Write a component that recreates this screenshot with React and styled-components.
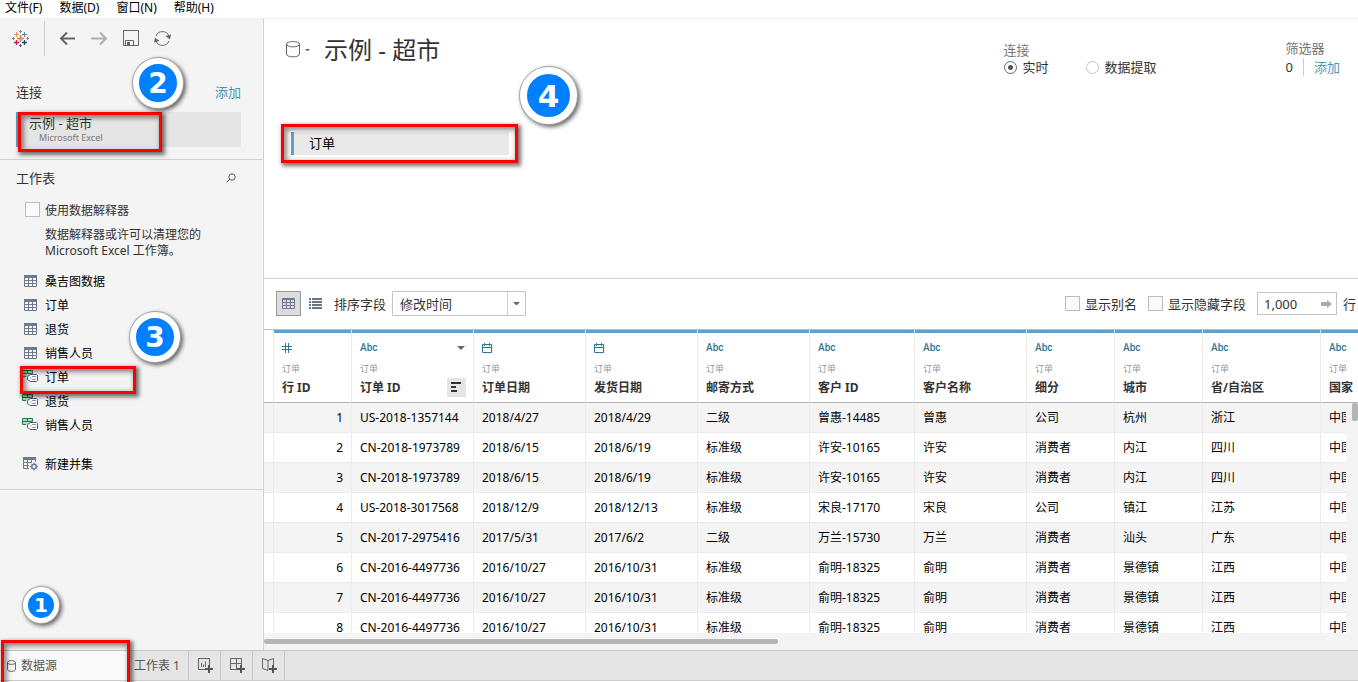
import React from "react";
import styled, { createGlobalStyle, css } from "styled-components";

const GlobalStyle = createGlobalStyle`
  *, *::before, *::after { box-sizing: border-box; }
  body {
    margin: 0;
    background: #fff;
    color: #333;
    font-family: "Noto Sans", "Noto Sans CJK SC", sans-serif;
    font-size: 12px;
    line-height: 16px;
  }
  button, input, select { font: inherit; color: inherit; margin: 0; }
  button { border: 0; padding: 0; background: none; cursor: pointer; }
  svg { display: block; flex: none; }
  h1, h2, p { margin: 0; font-weight: 400; }
  ul { list-style: none; margin: 0; padding: 0; }
`;

const Page = styled.div`
  display: flex;
  flex-direction: column;
  height: 100vh;
  overflow: hidden;
`;

const MenuBar = styled.nav`
  display: flex;
  gap: 17px;
  height: 19px;
  padding: 0 5px;
  border-bottom: 1px solid #f0f0f0;
  flex: none;
`;

const MenuButton = styled.button`
  color: #000;
  line-height: 16px;
  height: 16px;
`;

const Workspace = styled.div`
  display: grid;
  grid-template-columns: 264px minmax(0, 1fr);
  flex: 1;
  min-height: 0;
`;

const Sidebar = styled.aside`
  background: #f4f4f4;
  border-right: 1px solid #d0d0d0;
`;

const IconBar = styled.div`
  display: flex;
  align-items: center;
  gap: 14px;
  height: 39px;
  padding-left: 11px;
`;

const LogoBox = styled.div`
  display: flex;
  align-items: center;
  height: 35px;
  padding-right: 14px;
  border-right: 1px solid #cfcfcf;
`;

const SidebarSection = styled.section`
  border-bottom: 1px solid #d0d0d0;
  padding: ${(p) => p.$pad};
`;

const SectionHead = styled.div`
  display: flex;
  justify-content: space-between;
  align-items: center;
  margin-bottom: ${(p) => p.$gap}px;
  padding-right: ${(p) => p.$right || 0}px;
  h2 { font-size: 13px; }
`;

const AccentLink = styled.a`
  color: #4a97ba;
  font-size: 13px;
  text-decoration: none;
`;

const Anchor = styled.div`
  position: relative;
`;

const Connection = styled.button`
  display: block;
  width: 100%;
  height: 35px;
  padding-left: 10px;
  text-align: left;
  background: #e5e5e5;
  border-left: 3px solid #5fa2c6;
  font-size: 13px;
  small {
    display: block;
    padding-left: 10px;
    font-size: 9px;
    line-height: 14px;
    color: #777;
  }
`;

const CheckLabel = styled.label`
  display: flex;
  align-items: center;
  gap: 5px;
  height: 16px;
  white-space: nowrap;
`;

const CheckBox = styled.input`
  appearance: none;
  width: 15px;
  height: 15px;
  background: #fafafa;
  border: 1px solid #bdbdbd;
`;

const Interpreter = styled.div`
  padding-left: 9px;
  label { height: 17px; align-items: flex-start; line-height: 18px; }
  p { padding: 8px 0 0 20px; width: 190px; }
`;

const SheetList = styled.ul`
  padding: ${(p) => p.$top}px 0 0 5px;
`;

const SheetItem = styled.li`
  position: relative;
`;

const SheetButton = styled.button`
  display: flex;
  align-items: center;
  gap: 5px;
  height: 24px;
  color: #000;
`;

const SheetName = styled.span`
  padding-top: 2px;
`;

const IconSlot = styled.span`
  display: flex;
  justify-content: center;
  width: 19px;
`;

const Mark = styled.div`
  position: absolute;
  z-index: 2;
  pointer-events: none;
  border: 3px solid #fe0000;
  box-shadow: 2px 2px 4px 1px rgba(0, 0, 0, 0.55), inset 2px 2px 5px 1px rgba(0, 0, 0, 0.45);
  top: ${(p) => p.$top}px;
  left: ${(p) => p.$left}px;
  width: ${(p) => p.$width}px;
  height: ${(p) => p.$height}px;
`;

const Step = styled.div`
  position: absolute;
  z-index: 3;
  pointer-events: none;
  display: flex;
  align-items: center;
  justify-content: center;
  top: ${(p) => p.$top}px;
  left: ${(p) => p.$left}px;
  width: ${(p) => p.$size}px;
  height: ${(p) => p.$size}px;
  border-radius: 50%;
  border: ${(p) => p.$ring}px solid #fff;
  background: #007fff;
  color: #fff;
  font: bold ${(p) => p.$font}px "DejaVu Sans", sans-serif;
  box-shadow: 0 0 0 1px #a5a5a5, 2px 2px 4px 1px rgba(0, 0, 0, 0.6);
`;

const Main = styled.main`
  display: flex;
  flex-direction: column;
  min-height: 0;
`;

const Canvas = styled.section`
  position: relative;
  height: 260px;
  flex: none;
  border-bottom: 1px solid #d0d0d0;
`;

const CanvasHead = styled.header`
  display: flex;
  align-items: flex-start;
  height: 105px;
  padding: 20px 18px 0 22px;
`;

const SourceTitle = styled.div`
  display: flex;
  align-items: center;
  gap: 5px;
  flex: 1;
  h1 { font-size: 24px; line-height: 22px; padding-left: 9px; }
`;

const OptionGroup = styled.fieldset`
  border: 0;
  margin: 0 129px 0 0;
  padding: 3px 0 0;
`;

const GroupTitle = styled.div`
  color: #777;
  font-size: 13px;
`;

const OptionRow = styled.div`
  display: flex;
  gap: 37px;
  padding-top: 1px;
`;

const RadioLabel = styled.label`
  display: flex;
  align-items: center;
  gap: 6px;
  font-size: 13px;
`;

const Radio = styled.input`
  appearance: none;
  width: 13px;
  height: 13px;
  border-radius: 50%;
  border: 1px solid #c4c4c4;
  background: #fff;
  &:checked {
    border-color: #666;
    background: radial-gradient(circle, #555 0 2px, #fff 3px);
  }
`;

const FilterGroup = styled.div`
  padding-top: 1px;
`;

const FilterRow = styled.div`
  display: flex;
  align-items: center;
  padding-top: 2px;
  font-size: 13px;
  span { padding-right: 10px; }
  a { border-left: 1px solid #ccc; padding-left: 10px; line-height: 18px; }
`;

const PillRow = styled.div`
  position: relative;
  padding: 8px 0 0 27px;
`;

const TablePill = styled.button`
  display: block;
  width: 218px;
  height: 23px;
  padding: 0 0 1px 15px;
  text-align: left;
  font-size: 13px;
  color: #000;
  background: #e9e9e9;
  border-left: 3px solid #5fa2c6;
`;

const GridBar = styled.div`
  display: flex;
  align-items: center;
  height: 50px;
  padding: 0 2px 1px 12px;
  flex: none;
  font-size: 13px;
`;

const ViewButton = styled.button`
  display: flex;
  align-items: center;
  justify-content: center;
  width: 25px;
  height: 25px;
  margin-right: 2px;
  ${(p) => p.$on && css`background: #dcdcdc; border: 1px solid #999;`}
`;

const SortLabel = styled.label`
  padding: 0 6px 0 4px;
`;

const SelectBox = styled.div`
  position: relative;
  margin-right: auto;
  select {
    appearance: none;
    display: block;
    width: 134px;
    height: 25px;
    padding: 0 26px 0 7px;
    background: #fff;
    border: 1px solid #c4c4c4;
    border-radius: 1px;
  }
`;

const SelectArrow = styled.span`
  position: absolute;
  inset: 1px 1px 1px auto;
  width: 18px;
  display: flex;
  align-items: center;
  justify-content: center;
  border-left: 1px solid #d0d0d0;
  pointer-events: none;
`;

const GridOptions = styled.div`
  display: flex;
  align-items: center;
  gap: 11px;
`;

const RowCount = styled.label`
  display: flex;
  align-items: center;
  gap: 6px;
`;

const CountField = styled.span`
  display: flex;
  align-items: center;
  width: 80px;
  height: 23px;
  padding: 0 4px 0 6px;
  border: 1px solid #c4c4c4;
  input { width: 0; flex: 1; border: 0; padding: 0; outline: 0; background: none; }
`;

const Grid = styled.div`
  position: relative;
  display: flex;
  flex-direction: column;
  flex: 1;
  min-height: 0;
  border-top: 1px solid #bbb;
`;

const GridView = styled.div`
  flex: 1;
  min-height: 0;
  overflow: hidden;
`;

const Table = styled.table`
  width: 100%;
  table-layout: fixed;
  border-collapse: separate;
  border-spacing: 0;
  th, td { padding: 0; white-space: nowrap; overflow: hidden; text-align: left; border-right: 1px solid #ebebeb; }
  th { border-bottom: 1px solid #b5b5b5; }
  td { height: 30px; padding: 0 8px; color: #000; border-bottom: 1px solid #ebebeb; text-overflow: clip; }
  th:last-child, td:last-child { border-right: 0; }
  td:nth-child(2) { text-align: right; }
  tbody tr:nth-child(odd) { background: #f4f4f4; }
`;

const HeadBox = styled.div`
  border-top: 3px solid #5fa2c6;
  padding: 7px 8px 0;
  height: 72px;
`;

const TypeRow = styled.div`
  display: flex;
  align-items: center;
  justify-content: space-between;
  height: 16px;
  color: #2f7693;
  font: 500 10px/16px Roboto, sans-serif;
`;

const TableName = styled.div`
  margin: 7px 0 5px;
  font-size: 9px;
  line-height: 12px;
  font-weight: 400;
  color: #999;
`;

const FieldName = styled.div`
  display: flex;
  align-items: center;
  justify-content: space-between;
  height: 16px;
  font-weight: 700;
`;

const SortButton = styled.button`
  display: flex;
  align-items: center;
  justify-content: center;
  width: 19px;
  height: 19px;
  margin: -2px -1px 0 0;
  background: #e6e6e6;
`;

const VerticalBar = styled.div`
  position: absolute;
  top: 73px;
  right: 0;
  bottom: 0;
  width: 12px;
  background: #f4f4f4;
  &::before {
    content: "";
    display: block;
    width: 6px;
    height: 18px;
    margin-left: auto;
    border-radius: 2px;
    background: #b5b5b5;
  }
`;

const HorizontalBar = styled.div`
  display: flex;
  align-items: center;
  height: 17px;
  background: #f4f4f4;
  flex: none;
  &::before {
    content: "";
    width: 47%;
    height: 5px;
    border-radius: 2px;
    background: #b5b5b5;
  }
`;

const TabBar = styled.footer`
  display: flex;
  height: 31px;
  margin-bottom: 1px;
  background: #e5e5e5;
  border-top: 1px solid #c6c6c6;
  border-bottom: 1px solid #cdcdcd;
  flex: none;
`;

const TabSlot = styled.div`
  position: relative;
  display: flex;
`;

const Tab = styled.button`
  display: flex;
  align-items: center;
  gap: 5px;
  width: ${(p) => p.$width}px;
  padding-left: ${(p) => p.$pad}px;
  color: #555;
  background: ${(p) => (p.$on ? "#f9f9f9" : "none")};
  border-right: 1px solid #c6c6c6;
`;

const stroke = { fill: "none", stroke: "#666", strokeWidth: 1 };

function Plus({ x, y, r, c, w = 1 }) {
  return <path d={`M${x - r} ${y}H${x + r}M${x} ${y - r}V${y + r}`} stroke={c} strokeWidth={w} />;
}

const Logo = () => (
  <svg width="19" height="19" viewBox="0 0 19 19">
    <Plus x={9.5} y={9.5} r={3.5} c="#eb7b3c" w={1.4} />
    <Plus x={5.5} y={5.5} r={2.5} c="#ec914e" />
    <Plus x={13.5} y={5.5} r={2.5} c="#548a9c" />
    <Plus x={5.5} y={13.5} r={2.5} c="#c8203f" w={1.3} />
    <Plus x={13.5} y={13.5} r={2.5} c="#1f447e" w={1.3} />
    <Plus x={9.5} y={2.5} r={1.5} c="#7199a6" />
    <Plus x={9.5} y={16.5} r={1.5} c="#5b6591" />
    <Plus x={2.5} y={9.5} r={1.5} c="#8099a6" />
    <Plus x={16.5} y={9.5} r={1.5} c="#7199a6" />
  </svg>
);

const Arrow = ({ flip, color }) => (
  <svg width="18" height="15" viewBox="0 0 18 15" fill="none" stroke={color} strokeWidth="2">
    <path d={flip ? "M0 7.5H15M9 1.5L15 7.5L9 13.5" : "M16 7.5H2M8 1.5L2 7.5L8 13.5"} />
  </svg>
);

const SaveIcon = () => (
  <svg width="17" height="17" viewBox="0 0 17 17" {...stroke}>
    <path d="M.5 .5H15.5V15.5H.5ZM2.5 15.5V10.5H10.5V15.5" />
    <path d="M4 12H7V15H4Z" fill="#666" stroke="none" />
  </svg>
);

const RefreshIcon = () => (
  <svg width="17" height="17" viewBox="0 0 17 17" fill="none" stroke="#666">
    <path d="M2 6A7 7 0 0 1 15 6M15 11A7 7 0 0 1 2 11" />
    <path d="M11.5 6L17 4.5L16 9.5ZM5.5 11L0 12.5L1 7.5Z" fill="#666" stroke="none" />
  </svg>
);

const SearchIcon = () => (
  <svg width="10" height="10" viewBox="0 0 10 10" fill="none" stroke="#555">
    <circle cx="6" cy="4" r="3.2" /><path d="M3.8 6.2L.5 9.5" />
  </svg>
);

const TableIcon = () => (
  <svg width="13" height="12" viewBox="0 0 13 12">
    <path d="M0 0H13V3H0Z" fill="#6f7a8c" />
    <path d="M.5 .5H12.5V11.5H.5ZM0 5.5H13M0 8.5H13M4.5 3V12M8.5 3V12" fill="none" stroke="#6f7a8c" />
  </svg>
);

const RangeIcon = () => (
  <svg width="17" height="15" viewBox="0 0 17 15">
    <path d="M.5 .5H10.5V6.5H.5Z" fill="#a9dfbd" />
    <path d="M.5 .5H10.5V3.5H.5ZM5.5 0V4M.5 3V6.5H4" fill="none" stroke="#1d8049" />
    <path d="M8.5 4.5H14.5L15.5 5.5V10.5L14.5 11.5H8.5L5.5 9.5V6.5Z" fill="#fff" stroke="#525a72" />
    <path d="M10 6.5H14M10 9.5H14M8 8H9.5" stroke="#8d93a4" />
  </svg>
);

const UnionIcon = () => (
  <svg width="15" height="14" viewBox="0 0 15 14" fill="none" stroke="#6f7a8c">
    <path d="M0 0H13V3H0Z" fill="#6f7a8c" stroke="none" />
    <path d="M.5 .5V11.5H6M0 5.5H8M0 8.5H6M4.5 3V12M8.5 3V6M12.5 1V5" />
    <circle cx="11" cy="9.5" r="2.3" strokeWidth="1.5" />
    <path d="M11 5.5V7M11 12V13.8M7 9.5H8.5M13.5 9.5H15M8.2 6.7L9.3 7.8M12.8 11.2L13.9 12.3M13.8 6.7L12.7 7.8M9.2 11.2L8.1 12.3" />
  </svg>
);

const Cylinder = ({ small }) => (
  <svg width={small ? 9 : 14} height={small ? 12 : 18} viewBox={small ? "0 0 9 12" : "0 0 14 18"} {...stroke}>
    {small ? (
      <path d="M.5 2.5C.5 0 8.5 0 8.5 2.5V9.5C8.5 12 .5 12 .5 9.5ZM.5 2.5C.5 5 8.5 5 8.5 2.5" />
    ) : (
      <path d="M.5 3C.5 -.2 13.5 -.2 13.5 3V13C13.5 16.8 .5 16.8 .5 13ZM.5 3C.5 6.8 13.5 6.8 13.5 3" />
    )}
  </svg>
);

const Caret = ({ w = 8, color = "#666" }) => (
  <svg width={w} height={w / 2} viewBox="0 0 8 4"><path d="M0 0H8L4 4Z" fill={color} /></svg>
);

const GridIcon = () => (
  <svg width="13" height="11" viewBox="0 0 13 11" fill="none" stroke="#6f7a8c">
    <path d="M.5 .5H12.5V10.5H.5ZM0 1.5H13M0 4.5H13M0 7.5H13M4.5 1V11M8.5 1V11" />
  </svg>
);

const ListIcon = () => (
  <svg width="13" height="11" viewBox="0 0 13 11" stroke="#6b7486" strokeWidth="2">
    <path d="M0 1H2M3 1H13M0 4H2M3 4H13M0 7H2M3 7H13M0 10H2M3 10H13" />
  </svg>
);

const GoIcon = () => (
  <svg width="11" height="8" viewBox="0 0 11 8"><path d="M0 2H6V0L11 4L6 8V6H0Z" fill="#aaa" /></svg>
);

const HashIcon = () => (
  <svg width="10" height="10" viewBox="0 0 10 10" stroke="#2f7693"><path d="M3.5 0V10M6.5 0V10M0 3.5H10M0 6.5H10" /></svg>
);

const DateIcon = () => (
  <svg width="10" height="10" viewBox="0 0 10 10" fill="none" stroke="#2f7693">
    <path d="M.5 1.5H9.5V9.5H.5ZM0 4.5H10M2.5 0V3M7.5 0V3" />
  </svg>
);

const SortIcon = () => (
  <svg width="11" height="10" viewBox="0 0 11 10" stroke="#333" strokeWidth="2"><path d="M0 1H10M0 5H5M0 9H6" /></svg>
);

const newSheet = {
  sheet: "M1.5 1.5H12.5V8M8 12.5H1.5V1.5M4.5 6V10M6.5 7.5V10M8.5 4.5V10",
  board: "M1.5 1.5H12.5V8M8 12.5H1.5V1.5M1 6.5H13M7.5 1V12.5",
  story: "M7 3.5L1.5 1.5V11.5L7 13.5V3.5L12.5 1.5V8",
};

const NewIcon = ({ kind }) => (
  <svg width="17" height="17" viewBox="0 0 17 17" {...stroke}>
    <path d={newSheet[kind]} />
    <path d="M8 12H16M12 8V16" stroke="#555" strokeWidth="2" />
  </svg>
);

const sheets = [
  ["桑吉图数据", TableIcon], ["订单", TableIcon], ["退货", TableIcon], ["销售人员", TableIcon],
  ["订单", RangeIcon, true], ["退货", RangeIcon], ["销售人员", RangeIcon],
];

const columns = [
  ["行 ID", "num", 78], ["订单 ID", "abc", 122], ["订单日期", "date", 112], ["发货日期", "date", 112],
  ["邮寄方式", "abc", 112], ["客户 ID", "abc", 105], ["客户名称", "abc", 112], ["细分", "abc", 88],
  ["城市", "abc", 88], ["省/自治区", "abc", 118], ["国家", "abc"],
];

const rows = [
  ["1", "US-2018-1357144", "2018/4/27", "2018/4/29", "二级", "曾惠-14485", "曾惠", "公司", "杭州", "浙江", "中国"],
  ["2", "CN-2018-1973789", "2018/6/15", "2018/6/19", "标准级", "许安-10165", "许安", "消费者", "内江", "四川", "中国"],
  ["3", "CN-2018-1973789", "2018/6/15", "2018/6/19", "标准级", "许安-10165", "许安", "消费者", "内江", "四川", "中国"],
  ["4", "US-2018-3017568", "2018/12/9", "2018/12/13", "标准级", "宋良-17170", "宋良", "公司", "镇江", "江苏", "中国"],
  ["5", "CN-2017-2975416", "2017/5/31", "2017/6/2", "二级", "万兰-15730", "万兰", "消费者", "汕头", "广东", "中国"],
  ["6", "CN-2016-4497736", "2016/10/27", "2016/10/31", "标准级", "俞明-18325", "俞明", "消费者", "景德镇", "江西", "中国"],
  ["7", "CN-2016-4497736", "2016/10/27", "2016/10/31", "标准级", "俞明-18325", "俞明", "消费者", "景德镇", "江西", "中国"],
  ["8", "CN-2016-4497736", "2016/10/27", "2016/10/31", "标准级", "俞明-18325", "俞明", "消费者", "景德镇", "江西", "中国"],
];

const typeMark = { num: <HashIcon />, date: <DateIcon />, abc: "Abc" };

function SidePanel() {
  return (
    <Sidebar>
      <IconBar>
        <LogoBox><Logo /></LogoBox>
        <button aria-label="后退"><Arrow color="#666" /></button>
        <button aria-label="前进"><Arrow flip color="#b0b0b0" /></button>
        <button aria-label="保存"><SaveIcon /></button>
        <button aria-label="刷新"><RefreshIcon /></button>
      </IconBar>
      <SidebarSection $pad="26px 22px 12px 16px">
        <SectionHead $gap={12}><h2>连接</h2><AccentLink href="#add">添加</AccentLink></SectionHead>
        <Anchor>
          <Connection>示例 - 超市<small>Microsoft Excel</small></Connection>
          <Mark $top={0} $left={2} $width={144} $height={40} />
          <Step $top={-54} $left={117} $size={50} $ring={6} $font={28}>2</Step>
        </Anchor>
      </SidebarSection>
      <SidebarSection $pad="10px 22px 13px 16px">
        <SectionHead $gap={16} $right={5}>
          <h2>工作表</h2>
          <button aria-label="搜索"><SearchIcon /></button>
        </SectionHead>
        <Interpreter>
          <CheckLabel><CheckBox type="checkbox" />使用数据解释器</CheckLabel>
          <p>数据解释器或许可以清理您的 Microsoft Excel 工作簿。</p>
        </Interpreter>
        <SheetList $top={10}>
          {sheets.map(([name, Icon, marked], i) => (
            <SheetItem key={i}>
              <SheetButton><IconSlot><Icon /></IconSlot><SheetName>{name}</SheetName></SheetButton>
              {marked && (
                <>
                  <Mark $top={1} $left={-1} $width={116} $height={28} />
                  <Step $top={-53} $left={109} $size={50} $ring={6} $font={28}>3</Step>
                </>
              )}
            </SheetItem>
          ))}
        </SheetList>
        <SheetList $top={15}>
          <SheetItem>
            <SheetButton><IconSlot><UnionIcon /></IconSlot><SheetName>新建并集</SheetName></SheetButton>
          </SheetItem>
        </SheetList>
      </SidebarSection>
    </Sidebar>
  );
}

function DataGrid() {
  return (
    <Grid>
      <GridView>
        <Table>
          <colgroup>
            <col style={{ width: 10 }} />
            {columns.map(([name, , width]) => <col key={name} style={{ width }} />)}
          </colgroup>
          <thead>
            <tr>
              <th />
              {columns.map(([name, type], i) => (
                <th key={name} scope="col">
                  <HeadBox>
                    <TypeRow>{typeMark[type]}{i === 1 && <Caret />}</TypeRow>
                    <TableName>订单</TableName>
                    <FieldName>
                      {name}
                      {i === 1 && <SortButton aria-label="排序"><SortIcon /></SortButton>}
                    </FieldName>
                  </HeadBox>
                </th>
              ))}
            </tr>
          </thead>
          <tbody>
            {rows.map((row) => (
              <tr key={row[0]}><td />{row.map((value, i) => <td key={i}>{value}</td>)}</tr>
            ))}
          </tbody>
        </Table>
      </GridView>
      <HorizontalBar />
      <VerticalBar />
    </Grid>
  );
}

export default function App() {
  return (
    <Page>
      <GlobalStyle />
      <MenuBar>
        {["文件(F)", "数据(D)", "窗口(N)", "帮助(H)"].map((m) => <MenuButton key={m}>{m}</MenuButton>)}
      </MenuBar>
      <Workspace>
        <SidePanel />
        <Main>
          <Canvas>
            <CanvasHead>
              <SourceTitle>
                <Cylinder />
                <Caret w={5} />
                <h1>示例 - 超市</h1>
              </SourceTitle>
              <OptionGroup>
                <GroupTitle>连接</GroupTitle>
                <OptionRow>
                  <RadioLabel><Radio type="radio" name="mode" defaultChecked />实时</RadioLabel>
                  <RadioLabel><Radio type="radio" name="mode" />数据提取</RadioLabel>
                </OptionRow>
              </OptionGroup>
              <FilterGroup>
                <GroupTitle>筛选器</GroupTitle>
                <FilterRow><span>0</span><AccentLink href="#filter">添加</AccentLink></FilterRow>
              </FilterGroup>
            </CanvasHead>
            <PillRow>
              <TablePill>订单</TablePill>
              <Mark $top={0} $left={17} $width={237} $height={39} />
              <Step $top={-57} $left={256} $size={57} $ring={7} $font={31}>4</Step>
            </PillRow>
          </Canvas>
          <GridBar>
            <ViewButton $on aria-label="网格视图"><GridIcon /></ViewButton>
            <ViewButton aria-label="列表视图"><ListIcon /></ViewButton>
            <SortLabel htmlFor="sort">排序字段</SortLabel>
            <SelectBox>
              <select id="sort"><option>修改时间</option></select>
              <SelectArrow><Caret w={7} /></SelectArrow>
            </SelectBox>
            <GridOptions>
              <CheckLabel><CheckBox type="checkbox" />显示别名</CheckLabel>
              <CheckLabel><CheckBox type="checkbox" />显示隐藏字段</CheckLabel>
              <RowCount>
                <CountField><input type="text" defaultValue="1,000" aria-label="行数" /><GoIcon /></CountField>
                行
              </RowCount>
            </GridOptions>
          </GridBar>
          <DataGrid />
        </Main>
      </Workspace>
      <TabBar>
        <TabSlot>
          <Tab $on $width={130} $pad={7}><Cylinder small />数据源</Tab>
          <Mark $top={-11} $left={1} $width={129} $height={48} />
          <Step $top={-64} $left={23} $size={36} $ring={5} $font={20}>1</Step>
        </TabSlot>
        <Tab $width={59} $pad={4}>工作表 1</Tab>
        <Tab $width={32} $pad={8} aria-label="新建工作表"><NewIcon kind="sheet" /></Tab>
        <Tab $width={32} $pad={8} aria-label="新建仪表板"><NewIcon kind="board" /></Tab>
        <Tab $width={32} $pad={8} aria-label="新建故事"><NewIcon kind="story" /></Tab>
      </TabBar>
    </Page>
  );
}
